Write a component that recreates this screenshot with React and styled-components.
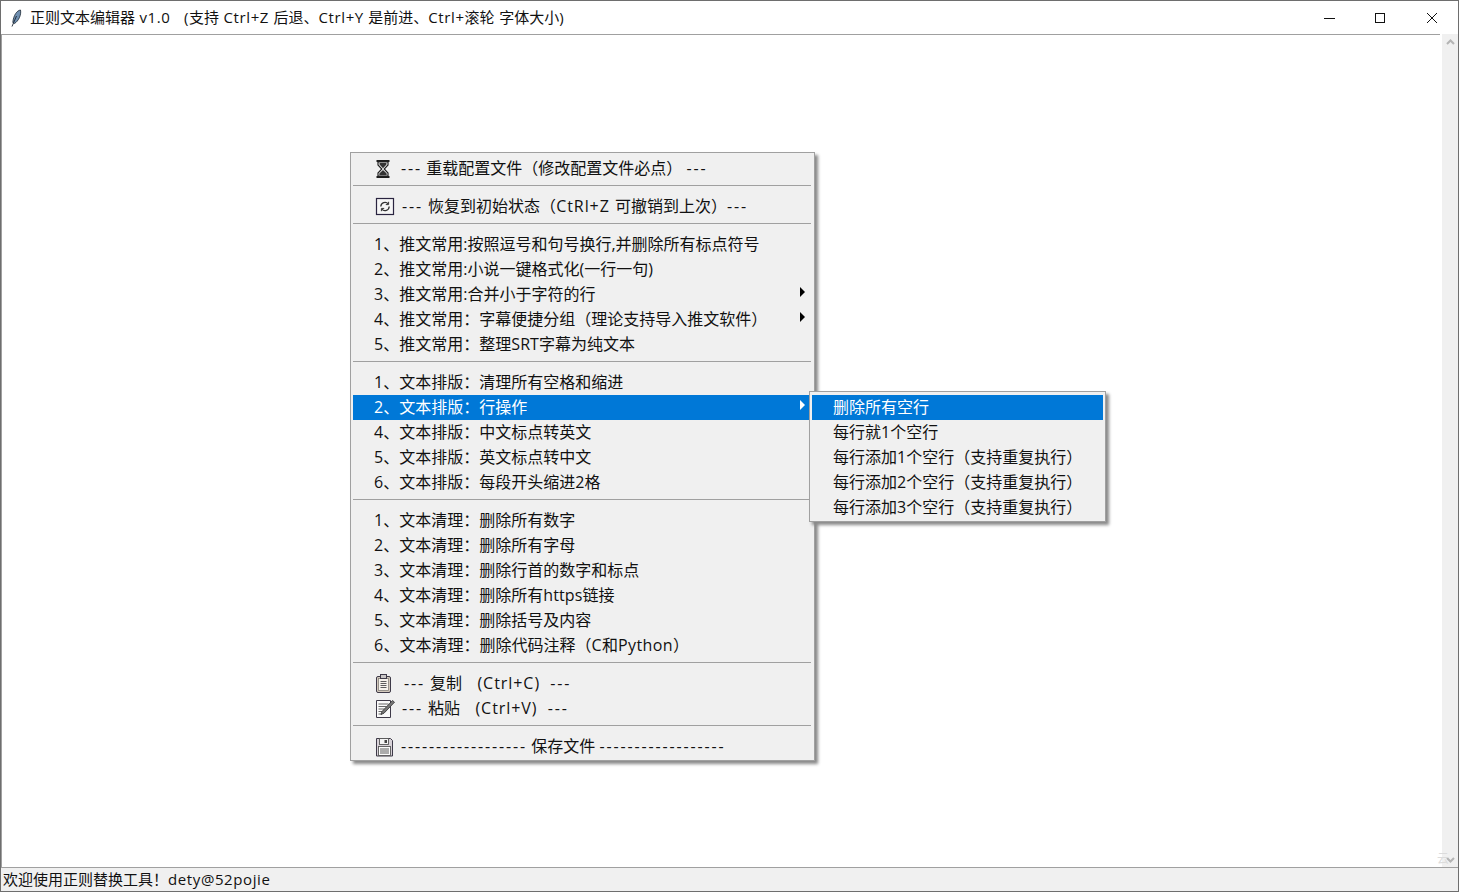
import styled, { createGlobalStyle } from 'styled-components'

const GlobalStyle = createGlobalStyle`
    html, body {
        margin: 0;
        padding: 0;
        height: 100%;
        background: #fff;
        overflow: hidden;
    }
    #root {
        height: 100%;
    }
`

const FONT = `"Open Sans", "Noto Sans CJK SC", sans-serif`

const Window = styled.div`
    display: flex;
    flex-direction: column;
    height: 892px;
    box-sizing: border-box;
    border-top: 1px solid #6e6e6e;
    border-left: 1px solid #6e6e6e;
    border-right: 1px solid #6e6e6e;
    font-family: ${FONT};
    color: #111;
    overflow: hidden;
`

const TitleBar = styled.div`
    display: flex;
    align-items: center;
    height: 33px;
    flex-shrink: 0;
    background: #fff;
`

const TitleIcon = styled.svg`
    width: 16px;
    height: 18px;
    margin-left: 8px;
    flex-shrink: 0;
`

const TitleText = styled.div`
    margin-left: 5px;
    flex: 1;
    font-size: 15px;
    line-height: 33px;
    white-space: pre;
`

const WindowButton = styled.div`
    width: 52px;
    height: 33px;
    display: flex;
    align-items: center;
    justify-content: center;
`

const Middle = styled.div`
    flex: 1;
    display: flex;
    position: relative;
    min-height: 0;
`

const Editor = styled.div`
    flex: 1;
    background: #fff;
    border-top: 1px solid #a0a0a0;
    border-left: 1px solid #a0a0a0;
    margin-right: 2px;
`

const Scrollbar = styled.div`
    width: 16px;
    box-sizing: border-box;
    background: #f0f0f0;
    display: flex;
    flex-direction: column;
    justify-content: space-between;
    align-items: center;
    padding: 5px 0 4px;
`

const Smudge = styled.span`
    position: absolute;
    right: 9px;
    bottom: 1px;
    font-size: 12px;
    line-height: 14px;
    color: #dcdcdc;
`

const StatusBar = styled.div`
    height: 23px;
    flex-shrink: 0;
    background: #f0f0f0;
    border-top: 1px solid #a0a0a0;
    border-bottom: 1px solid #6e6e6e;
    font-size: 15px;
    line-height: 23px;
    padding-left: 2px;
    white-space: pre;
`

const Menu = styled.div`
    position: absolute;
    left: ${p => p.$left}px;
    top: ${p => p.$top}px;
    width: ${p => p.$width}px;
    box-sizing: border-box;
    padding: 3px 2px 1px;
    background: #f0f0f0;
    border: 1px solid #a0a0a0;
    box-shadow: 3px 3px 3px #8a8a8a;
    z-index: ${p => p.$layer};
`

const Row = styled.div`
    position: relative;
    display: flex;
    align-items: center;
    height: 25px;
    padding-left: ${p => p.$indent}px;
    font-size: 16px;
    line-height: 25px;
    white-space: pre;
    background: ${p => (p.$active ? '#0078d7' : 'transparent')};
    color: ${p => (p.$active ? '#fff' : '#111')};
`

const RowIcon = styled.svg`
    width: ${p => p.$box}px;
    height: 20px;
    flex-shrink: 0;
`

const Arrow = styled.span`
    position: absolute;
    right: 7px;
    top: 5px;
    width: 0;
    height: 0;
    border-top: 5px solid transparent;
    border-bottom: 5px solid transparent;
    border-left: 5px solid ${p => (p.$active ? '#fff' : '#000')};
`

const Separator = styled.div`
    height: 13px;
    box-sizing: border-box;
    padding-top: 4px;

    &::before {
        content: '';
        display: block;
        height: 1px;
        background: #a0a0a0;
        margin-right: 1px;
    }
`

// the original font has wider dashes and latin letters than anything installed
const Dash = styled.span`
    letter-spacing: 1.85px;
`

const Latin = styled.span`
    letter-spacing: ${p => p.$track}px;
`

function Label({ text, track }) {
    return text.split(/(-{2,}|[A-Za-z0-9@+.() ]+)/).map((part, i) => {
        if (/^-{2,}$/.test(part)) return <Dash key={i}>{part}</Dash>
        if (i % 2 === 1) return <Latin key={i} $track={track}>{part}</Latin>
        return part
    })
}

const Hourglass = () => (
    <RowIcon $box={27} viewBox="0 0 27 20">
        <path d="M2.500 2h13M2.500 18h13" stroke="#1c1c1c" strokeWidth="2" fill="none" />
        <path d="M4 3v3l3.800 4L4 14v3h10v-3l-3.800-4L14 6V3z" fill="#fff" stroke="#222" strokeWidth="1.200" />
        <path d="M5.500 4h7v1.500L9 9.300 5.500 5.500zM5.300 16.300v-1.800L9 11l3.700 3.500v1.800z" fill="#333" />
    </RowIcon>
)

const Reload = () => (
    <RowIcon $box={28} viewBox="0 0 28 20">
        <rect x="2.500" y="1.500" width="17" height="16" fill="#f6f6f6" stroke="#2a2440" strokeWidth="1.200" />
        <path d="M6.800 9.500a4.200 4.200 0 0 1 7.400-2.600M15.200 9.500a4.200 4.200 0 0 1-7.400 2.600" fill="none" stroke="#333" strokeWidth="1.300" />
        <path d="M14.600 4.800v2.800h-2.800M7.400 14.200v-2.800h2.800" fill="none" stroke="#333" strokeWidth="1" />
    </RowIcon>
)

const Clipboard = () => (
    <RowIcon $box={30} viewBox="0 0 30 20">
        <rect x="2.500" y="2.500" width="14" height="16" rx="1.500" fill="#d4cabd" stroke="#3e3a48" />
        <rect x="4.500" y="4.500" width="10" height="12" fill="#f6f3ec" stroke="#85807a" strokeWidth="0.800" />
        <rect x="6.500" y="0.500" width="6" height="4" fill="#c9c6c6" stroke="#3e3a48" />
        <path d="M6.500 7.500h6M6.500 9.500h6M6.500 11.500h6M6.500 13.500h6" stroke="#5c5c5c" strokeWidth="1" />
    </RowIcon>
)

const Note = () => (
    <RowIcon $box={28} viewBox="0 0 28 20">
        <path d="M2.500 1.500h14v17h-14z" fill="#fafafa" stroke="#3e3a48" />
        <path d="M4.500 5h10M4.500 7.500h8M4.500 10h6M4.500 12.500h4M4.500 15h3" stroke="#666" strokeWidth="1" />
        <path d="M18.500 1.500l2 1.700-10.500 11-3 1.300 1-3z" fill="#777" stroke="#2e2e2e" strokeWidth="0.800" />
    </RowIcon>
)

const Floppy = () => (
    <RowIcon $box={27} viewBox="0 0 27 20">
        <path d="M2.500 1.500h14l2 2v15.500h-16z" fill="#d8d2d8" stroke="#3e3a48" />
        <rect x="5.500" y="1.500" width="9" height="6" fill="#f4f4f4" stroke="#555" strokeWidth="0.900" />
        <rect x="10.500" y="3" width="2.500" height="3" fill="#444" />
        <rect x="4.500" y="9.500" width="12" height="9" fill="#fbfbfb" stroke="#555" strokeWidth="0.900" />
        <path d="M6 12h9M6 14h9M6 16h9" stroke="#5c5c5c" strokeWidth="1" />
    </RowIcon>
)

const mainMenu = [
    { icon: Hourglass, text: '--- 重载配置文件（修改配置文件必点） ---' },
    null,
    { icon: Reload, text: '--- 恢复到初始状态（CtRl+Z 可撤销到上次）---', track: 0.95 },
    null,
    { text: '1、推文常用:按照逗号和句号换行,并删除所有标点符号' },
    { text: '2、推文常用:小说一键格式化(一行一句)' },
    { text: '3、推文常用:合并小于字符的行', arrow: true },
    { text: '4、推文常用：字幕便捷分组（理论支持导入推文软件）', arrow: true },
    { text: '5、推文常用：整理SRT字幕为纯文本' },
    null,
    { text: '1、文本排版：清理所有空格和缩进' },
    { text: '2、文本排版：行操作', arrow: true, active: true },
    { text: '4、文本排版：中文标点转英文' },
    { text: '5、文本排版：英文标点转中文' },
    { text: '6、文本排版：每段开头缩进2格' },
    null,
    { text: '1、文本清理：删除所有数字' },
    { text: '2、文本清理：删除所有字母' },
    { text: '3、文本清理：删除行首的数字和标点' },
    { text: '4、文本清理：删除所有https链接' },
    { text: '5、文本清理：删除括号及内容' },
    { text: '6、文本清理：删除代码注释（C和Python）', track: 0.4 },
    null,
    { icon: Clipboard, text: '--- 复制   (Ctrl+C)  ---', track: 0.95 },
    { icon: Note, text: '--- 粘贴   (Ctrl+V)  ---', track: 0.95 },
    null,
    { icon: Floppy, text: '------------------ 保存文件 ------------------' },
]

const subMenu = [
    { text: '删除所有空行', active: true },
    { text: '每行就1个空行' },
    { text: '每行添加1个空行（支持重复执行）' },
    { text: '每行添加2个空行（支持重复执行）' },
    { text: '每行添加3个空行（支持重复执行）' },
]

function MenuRows({ items, indent }) {
    return items.map((item, i) => {
        if (!item) return <Separator key={i} />
        const Icon = item.icon
        return (
            <Row key={i} $active={item.active} $indent={indent}>
                {Icon && <Icon />}
                <span><Label text={item.text} track={item.track ?? 0.1} /></span>
                {item.arrow && <Arrow $active={item.active} />}
            </Row>
        )
    })
}

export default function App() {
    return (
        <>
            <GlobalStyle />
            <Window>
                <TitleBar>
                    <TitleIcon viewBox="0 0 16 18">
                        <path d="M11.500 1C8 1.500 4.500 6 3.800 13.500L5.500 14.500C9.500 12 12.500 6 11.500 1z" fill="#6f8fb0" stroke="#1c2733" strokeWidth="0.800" />
                        <path d="M3 17.500L7.500 7" stroke="#1c2733" strokeWidth="0.900" />
                    </TitleIcon>
                    <TitleText>
                        <Label text="正则文本编辑器 v1.0   (支持 Ctrl+Z 后退、Ctrl+Y 是前进、Ctrl+滚轮 字体大小)" track={0.6} />
                    </TitleText>
                    <WindowButton>
                        <svg width="14" height="10" viewBox="0 0 14 10"><path d="M3 5.500h11" stroke="#111" /></svg>
                    </WindowButton>
                    <WindowButton>
                        <svg width="10" height="10" viewBox="0 0 10 10"><rect x="0.500" y="0.500" width="9" height="9" fill="none" stroke="#111" /></svg>
                    </WindowButton>
                    <WindowButton>
                        <svg width="10" height="10" viewBox="0 0 10 10"><path d="M0 0l10 10M10 0L0 10" stroke="#111" /></svg>
                    </WindowButton>
                </TitleBar>
                <Middle>
                    <Editor />
                    <Scrollbar>
                        <svg width="9" height="6" viewBox="0 0 9 6"><path d="M1 5l3.500-3.500L8 5" fill="none" stroke="#b4b4b4" strokeWidth="2" /></svg>
                        <svg width="9" height="6" viewBox="0 0 9 6"><path d="M1 1l3.500 3.500L8 1" fill="none" stroke="#b4b4b4" strokeWidth="2" /></svg>
                    </Scrollbar>
                    <Smudge>云</Smudge>
                    <Menu $left={349} $top={118} $width={465} $layer={1}>
                        <MenuRows items={mainMenu} indent={21} />
                    </Menu>
                    <Menu $left={808} $top={357} $width={297} $layer={2}>
                        <MenuRows items={subMenu} indent={21} />
                    </Menu>
                </Middle>
                <StatusBar><Label text="欢迎使用正则替换工具！dety@52pojie" track={0.6} /></StatusBar>
            </Window>
        </>
    )
}
